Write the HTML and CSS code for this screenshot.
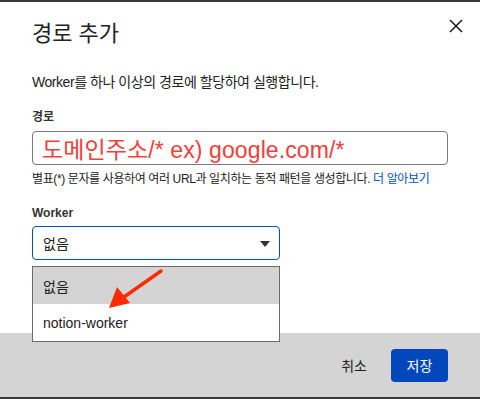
FILE: index.html
```html
<!DOCTYPE html>
<html lang="ko">
<head>
<meta charset="utf-8">
<link rel="stylesheet" href="styles.css">
</head>
<body>
<div class="frame">
  <div class="dialog">
    <div class="head">
      <h1 class="title">경로 추가</h1>
      <button class="close" aria-label="닫기">
        <svg width="14" height="14" viewBox="0 0 14 14"><path d="M1 1L13 13M13 1L1 13" stroke="#1a1a1a" stroke-width="1.5" fill="none"/></svg>
      </button>
    </div>
    <div class="content">
      <p class="desc">Worker를 하나 이상의 경로에 할당하여 실행합니다.</p>
      <div class="label">경로</div>
      <div class="input">도메인주소/* ex) google.com/*</div>
      <p class="help">별표(*) 문자를 사용하여 여러 URL과 일치하는 동적 패턴을 생성합니다. <a class="link">더 알아보기</a></p>
      <div class="label label-worker">Worker</div>
      <div class="select-wrap">
        <div class="select">
          <span>없음</span>
          <svg class="caret" width="10" height="6" viewBox="0 0 10 6"><path d="M0 0H10L5 6Z" fill="#333"/></svg>
        </div>
        <ul class="menu">
          <li class="opt opt-active">없음</li>
          <li class="opt">notion-worker</li>
        </ul>
      </div>
    </div>
    <div class="foot">
      <button class="btn-cancel">취소</button>
      <button class="btn-save">저장</button>
    </div>
  </div>
  <svg class="arrow" width="480" height="399" viewBox="0 0 480 399">
    <path d="M161 271L124 297" stroke="#ff2a00" stroke-width="3.5" stroke-linecap="round" fill="none"/>
    <path d="M109 308L117 287L130 303Z" fill="#ff2a00"/>
  </svg>
</div>
</body>
</html>
```
FILE: styles.css
```css
* { box-sizing: border-box; }
html, body { margin: 0; padding: 0; }
body {
  width: 480px;
  height: 399px;
  overflow: hidden;
  font-family: "Liberation Sans", "Noto Sans CJK KR", sans-serif;
  color: #222;
  background: #fff;
}
.frame {
  position: relative;
  width: 480px;
  height: 399px;
  border-top: 2px solid #3a3a3a;
  border-bottom: 2px solid #3a3a3a;
}
.dialog {
  display: flex;
  flex-direction: column;
  height: 395px;
}
.head {
  display: flex;
  justify-content: space-between;
  align-items: flex-start;
  padding: 18px 17px 0 32px;
  height: 70px;
}
.title {
  margin: 0;
  font-size: 22px;
  line-height: 28px;
  font-weight: 400;
  color: #222;
}
.close {
  border: 0;
  background: none;
  padding: 0;
  margin-top: -1px;
  width: 14px;
  height: 14px;
  display: flex;
}
.content {
  flex: 1;
  padding: 0 32px;
  position: relative;
}
.desc {
  margin: 0;
  font-size: 14px;
  line-height: 20px;
  color: #222;
  letter-spacing: -0.45px;
}
.label {
  margin-top: 17px;
  font-size: 12px;
  line-height: 16px;
  font-weight: 700;
  color: #333;
}
.input {
  margin-top: 6px;
  height: 34px;
  border: 1px solid #7a7a7a;
  border-radius: 4px;
  padding: 0 9px;
  display: flex;
  align-items: center;
  font-size: 23px;
  color: #f2403c;
  letter-spacing: 0.1px;
}
.help {
  margin: 6px 0 0;
  font-size: 12px;
  line-height: 16px;
  color: #222;
  letter-spacing: -0.38px;
}
.link { color: #0051c3; }
.label-worker { margin-top: 18px; }
.select-wrap {
  position: relative;
  width: 248px;
  margin-top: 5px;
}
.select {
  height: 34px;
  border: 1px solid #0051c3;
  border-radius: 4px;
  padding: 0 9px 0 10px;
  display: flex;
  align-items: center;
  justify-content: space-between;
  font-size: 14px;
  color: #222;
}
.caret { margin-top: 1px; }
.menu {
  position: absolute;
  left: 0;
  top: 40px;
  width: 248px;
  margin: 0;
  padding: 0;
  list-style: none;
  border: 1px solid #6b6b6b;
  background: #fff;
  z-index: 2;
}
.opt {
  height: 37px;
  padding: 0 10px;
  display: flex;
  align-items: center;
  font-size: 14px;
  color: #222;
}
.opt-active { background: #d4d4d4; }
.foot {
  height: 64px;
  background: #d4d4d4;
  display: flex;
  align-items: center;
  justify-content: flex-end;
  gap: 24px;
  padding: 0 32px 0 0;
}
.btn-cancel {
  border: 0;
  background: none;
  padding: 0;
  font-family: inherit;
  font-size: 14px;
  color: #222;
}
.btn-save {
  width: 57px;
  height: 33px;
  border: 0;
  border-radius: 4px;
  background: #0047bb;
  color: #fff;
  font-family: inherit;
  font-size: 14px;
}
.arrow {
  position: absolute;
  left: 0;
  top: -2px;
  z-index: 3;
  pointer-events: none;
}
```
